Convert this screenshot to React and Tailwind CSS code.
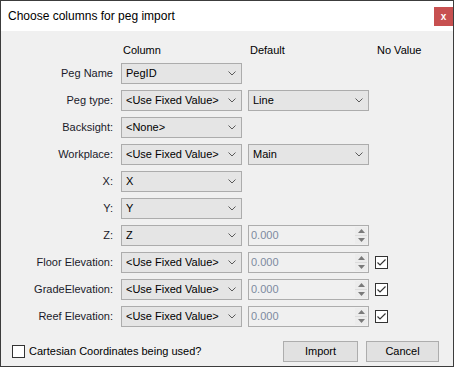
import React from 'react';

const rows = [
  { label: 'Peg Name', value: 'PegID' },
  { label: 'Peg type:', value: '<Use Fixed Value>', def: { kind: 'combo', value: 'Line' } },
  { label: 'Backsight:', value: '<None>' },
  { label: 'Workplace:', value: '<Use Fixed Value>', def: { kind: 'combo', value: 'Main' } },
  { label: 'X:', value: 'X' },
  { label: 'Y:', value: 'Y' },
  { label: 'Z:', value: 'Z', def: { kind: 'num' } },
  { label: 'Floor Elevation:', value: '<Use Fixed Value>', def: { kind: 'num' }, check: true },
  { label: 'GradeElevation:', value: '<Use Fixed Value>', def: { kind: 'num' }, check: true },
  { label: 'Reef Elevation:', value: '<Use Fixed Value>', def: { kind: 'num' }, check: true },
];

function Chevron() {
  return (
    <svg width="8" height="5" viewBox="0 0 8 5" className="shrink-0">
      <path d="M0.5 0.5 L4 4 L7.5 0.5" fill="none" stroke="#5a5a5a" strokeWidth="1" />
    </svg>
  );
}

function Combo({ value }) {
  return (
    <div className="flex items-center h-[21px] w-[121px] border border-[#acacac] bg-[#e5e5e5] pl-[4px] pr-[5px]">
      <span className="flex-1 truncate text-black">{value}</span>
      <Chevron />
    </div>
  );
}

function Numeric() {
  return (
    <div className="flex items-stretch h-[21px] w-[121px] border border-[#adadad] bg-[#f0f0f0]">
      <span className="flex-1 pl-[2px] leading-[19px] text-[#7d8aa0]">0.000</span>
      <div className="flex flex-col w-[12px] mr-[1px] my-[1px]">
        <div className="flex-1 flex items-center justify-center border-b border-[#dcdcdc] bg-[#ececec]">
          <svg width="7" height="4" viewBox="0 0 7 4"><path d="M3.5 0 L7 4 L0 4 Z" fill="#7a7a7a" /></svg>
        </div>
        <div className="flex-1 flex items-center justify-center bg-[#ececec]">
          <svg width="7" height="4" viewBox="0 0 7 4"><path d="M0 0 L7 0 L3.5 4 Z" fill="#7a7a7a" /></svg>
        </div>
      </div>
    </div>
  );
}

function CheckBox({ checked }) {
  return (
    <div className="flex items-center justify-center w-[13px] h-[13px] border border-[#333333] bg-white">
      {checked && (
        <svg width="11" height="11" viewBox="0 0 11 11">
          <path d="M1.5 5.5 L4 8 L9.5 2.5" fill="none" stroke="#333333" strokeWidth="1.2" />
        </svg>
      )}
    </div>
  );
}

export default function App() {
  return (
    <div
      className="w-[454px] h-[367px] border border-[#3c3c3c] bg-[#f0f0f0] flex flex-col text-[11px] text-black"
      style={{ fontFamily: '"Liberation Sans", Arial, sans-serif' }}
    >
      <div className="h-[30px] bg-white flex items-center justify-between shrink-0">
        <span className="pl-[7px] text-[12px] text-black">Choose columns for peg import</span>
        <div className="w-[19px] h-[19px] bg-[#c75050] flex items-center justify-center text-white font-bold text-[10px] leading-none mt-[1px]">
          x
        </div>
      </div>

      <div className="pt-[13px] flex flex-col">
        <div className="grid grid-cols-[114px_121px_121px_60px] gap-x-[6px] h-[13px] leading-[13px]">
          <span />
          <span className="pl-[2px]">Column</span>
          <span className="pl-[2px]">Default</span>
          <span className="pl-[2px]">No Value</span>
        </div>

        <div className="mt-[6px] flex flex-col gap-[6px]">
          {rows.map((r) => (
            <div key={r.label} className="grid grid-cols-[114px_121px_121px_13px] gap-x-[6px] items-center h-[21px]">
              <span className="text-right pr-[2px] text-[#1a1a2a]">{r.label}</span>
              <Combo value={r.value} />
              {r.def ? (r.def.kind === 'combo' ? <Combo value={r.def.value} /> : <Numeric />) : <span />}
              {r.check ? <CheckBox checked /> : <span />}
            </div>
          ))}
        </div>

        <div className="mt-[14px] flex items-center h-[21px]">
          <div className="ml-[11px]">
            <CheckBox />
          </div>
          <span className="ml-[4px]">Cartesian Coordinates being used?</span>
          <div className="ml-auto flex gap-[8px] mr-[14px]">
            <button className="w-[75px] h-[21px] border border-[#adadad] bg-[#e1e1e1]">Import</button>
            <button className="w-[73px] h-[21px] border border-[#adadad] bg-[#e1e1e1]">Cancel</button>
          </div>
        </div>
      </div>
    </div>
  );
}
